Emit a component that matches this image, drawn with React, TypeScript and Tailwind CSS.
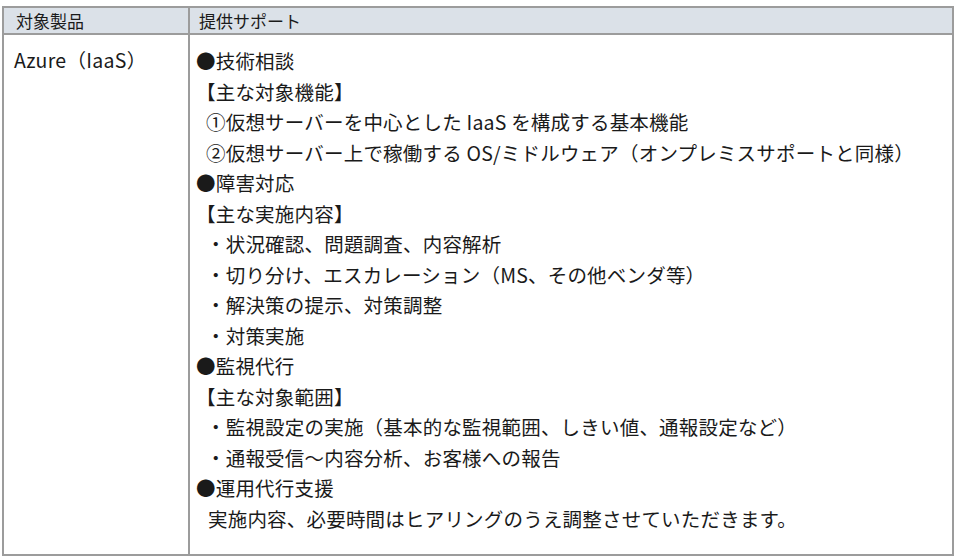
const lines: { text: string; indent?: string }[] = [
  { text: "●技術相談" },
  { text: "【主な対象機能】" },
  { text: "①仮想サーバーを中心とした IaaS を構成する基本機能", indent: "pl-[10px]" },
  { text: "②仮想サーバー上で稼働する OS/ミドルウェア（オンプレミスサポートと同様）", indent: "pl-[10px]" },
  { text: "●障害対応" },
  { text: "【主な実施内容】" },
  { text: "・状況確認、問題調査、内容解析", indent: "pl-[10px]" },
  { text: "・切り分け、エスカレーション（MS、その他ベンダ等）", indent: "pl-[10px]" },
  { text: "・解決策の提示、対策調整", indent: "pl-[10px]" },
  { text: "・対策実施", indent: "pl-[10px]" },
  { text: "●監視代行" },
  { text: "【主な対象範囲】" },
  { text: "・監視設定の実施（基本的な監視範囲、しきい値、通報設定など）", indent: "pl-[10px]" },
  { text: "・通報受信～内容分析、お客様への報告", indent: "pl-[10px]" },
  { text: "●運用代行支援" },
  { text: "実施内容、必要時間はヒアリングのうえ調整させていただきます。", indent: "pl-[12px]" },
];

export default function App() {
  return (
    <div className="w-[957px] h-[558px] bg-white pt-[6px] pl-[2px] font-['Noto_Sans_CJK_JP',sans-serif] text-[#1a1a1a]">
      <table className="w-[952px] border-collapse border-2 border-[#9c9c9c]">
        <thead>
          <tr className="bg-[#dbe1e8] text-[17px] h-[27px]">
            <th className="w-[186px] border-2 border-[#9c9c9c] text-left font-normal pl-[12px] leading-[23px]">対象製品</th>
            <th className="border-2 border-[#9c9c9c] text-left font-normal pl-[9px] leading-[23px]">提供サポート</th>
          </tr>
        </thead>
        <tbody>
          <tr>
            <td className="align-top border-2 border-[#9c9c9c] pl-[10px] pt-[10px] text-[19.5px] leading-[30.5px] tracking-[0.3px]">Azure（IaaS）</td>
            <td className="align-top border-2 border-[#9c9c9c] pl-[6px] pt-[11px] pb-[20px] text-[19.5px] leading-[30.5px] tracking-[0.2px]">
              {lines.map((l, i) => (
                <div key={i} className={l.indent}>
                  {l.text}
                </div>
              ))}
            </td>
          </tr>
        </tbody>
      </table>
    </div>
  );
}
